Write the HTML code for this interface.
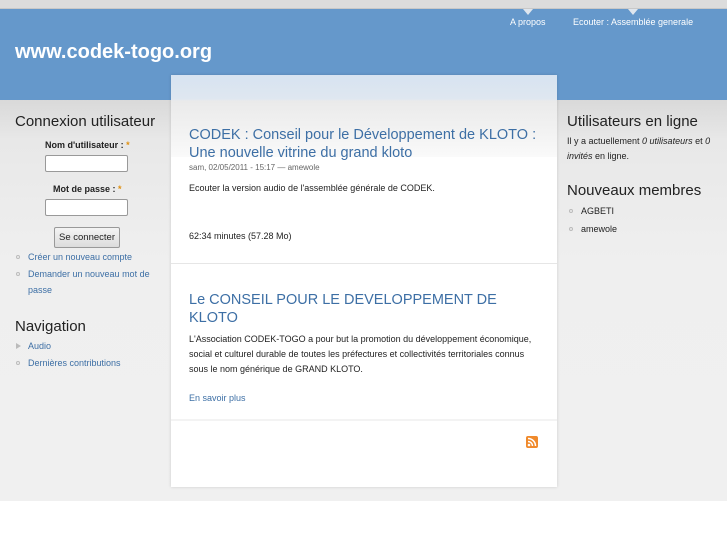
<!DOCTYPE html>
<html><head><meta charset="utf-8"><style>
*{margin:0;padding:0;box-sizing:border-box}
body{width:727px;height:545px;overflow:hidden;background:#fff;font-family:"Liberation Sans","DejaVu Sans",sans-serif;position:relative;color:#222}
.a{position:absolute}
#top{left:0;top:0;width:727px;height:9px;background:#dcdcdc;border-bottom:1px solid #c8c8c8}
#hdr{left:0;top:9px;width:727px;height:91px;background:#6598cb}
#body{left:0;top:100px;width:727px;height:401px;background:linear-gradient(#d9d9d9 0,#e8e8e8 40px,#efefef 160px,#f0f0f0)}
#main{left:171px;top:75px;width:386px;height:412px;background:#fff;box-shadow:0 0 3px rgba(0,0,0,.15)}
#mainTop{left:171px;top:75px;width:386px;height:82px;background:linear-gradient(#d7e3f1 0,#dfe7f0 24px,#eaeaea 26px,#f3f3f3 60px,#fafafa 82px)}
.nav{color:#fff;font-size:9px;top:17px}
.tri{width:0;height:0;border-left:5px solid transparent;border-right:5px solid transparent;border-top:6px solid #dfe6ee;top:9px}
h1{font-size:20px;color:#fff;font-weight:bold;left:15px;top:41px}
h2{font-weight:normal;font-size:15px;color:#222}
.lnk{color:#3d6fa5}
.s{font-size:9px}
.b{width:4px;height:4px;border:1px solid #bbb;border-radius:50%}
input{position:absolute;width:83px;height:17px;border:1px solid #999;border-radius:2px;background:#fff}
</style></head><body>
<div class="a" id="top"></div>
<div class="a" id="hdr"></div>
<div class="a tri" style="left:523px"></div>
<div class="a tri" style="left:628px"></div>
<div class="a nav" style="left:510px">A propos</div>
<div class="a nav" style="left:573px">Ecouter : Assemblée generale</div>
<h1 class="a">www.codek-togo.org</h1>
<div class="a" id="body"></div>
<div class="a" id="main"></div>
<div class="a" id="mainTop"></div>

<h2 class="a" style="left:15px;top:113px">Connexion utilisateur</h2>
<div class="a s" style="left:45px;top:140px;font-weight:bold">Nom d'utilisateur : <span style="color:#e09010">*</span></div>
<input style="left:45px;top:155px">
<div class="a s" style="left:53px;top:184px;font-weight:bold">Mot de passe : <span style="color:#e09010">*</span></div>
<input style="left:45px;top:199px">
<div class="a s" style="left:54px;top:227px;width:66px;height:21px;border:1px solid #999;border-radius:2px;background:linear-gradient(#f4f4f4,#dcdcdc);text-align:center;line-height:19px;font-size:9.5px">Se connecter</div>
<div class="a b" style="left:16px;top:255px"></div>
<div class="a s lnk" style="left:28px;top:252px">Créer un nouveau compte</div>
<div class="a b" style="left:16px;top:272px"></div>
<div class="a s lnk" style="left:28px;top:266px;width:135px;line-height:16px">Demander un nouveau mot de passe</div>
<h2 class="a" style="left:15px;top:318px">Navigation</h2>
<div class="a" style="left:16px;top:343px;width:0;height:0;border-top:3px solid transparent;border-bottom:3px solid transparent;border-left:5px solid #bbb"></div>
<div class="a s lnk" style="left:28px;top:341px">Audio</div>
<div class="a b" style="left:16px;top:361px"></div>
<div class="a s lnk" style="left:28px;top:358px">Dernières contributions</div>

<div class="a lnk" style="left:189px;top:126px;font-size:14.5px;line-height:18px;width:360px">CODEK : Conseil pour le Développement de KLOTO : Une nouvelle vitrine du grand kloto</div>
<div class="a" style="left:189px;top:163px;font-size:8px;color:#666">sam, 02/05/2011 - 15:17 — amewole</div>
<div class="a s" style="left:189px;top:183px">Ecouter la version audio de l'assemblée générale de CODEK.</div>
<div class="a s" style="left:189px;top:231px">62:34 minutes (57.28 Mo)</div>
<div class="a" style="left:171px;top:263px;width:386px;height:1px;background:#e6e6e6"></div>
<div class="a lnk" style="left:189px;top:291px;font-size:14.5px;line-height:18px;width:340px">Le CONSEIL POUR LE DEVELOPPEMENT DE KLOTO</div>
<div class="a s" style="left:189px;top:332px;line-height:15px;width:352px">L'Association CODEK-TOGO a pour but la promotion du développement économique, social et culturel durable de toutes les préfectures et collectivités territoriales connus sous le nom générique de GRAND KLOTO.</div>
<div class="a s lnk" style="left:189px;top:393px">En savoir plus</div>
<div class="a" style="left:171px;top:419px;width:386px;height:2px;background:#f3f3f3"></div>
<svg class="a" style="left:526px;top:436px" width="12" height="12" viewBox="0 0 12 12"><rect width="12" height="12" rx="2" fill="#f08a2c"/><circle cx="3" cy="9" r="1.3" fill="#fff"/><path d="M2 5.5a4.5 4.5 0 0 1 4.5 4.5M2 2.5a7.5 7.5 0 0 1 7.5 7.5" stroke="#fff" stroke-width="1.5" fill="none"/></svg>

<h2 class="a" style="left:567px;top:113px">Utilisateurs en ligne</h2>
<div class="a s" style="left:567px;top:134px;line-height:15px;width:150px">Il y a actuellement <i>0 utilisateurs</i> et <i>0 invités</i> en ligne.</div>
<h2 class="a" style="left:567px;top:182px">Nouveaux membres</h2>
<div class="a b" style="left:569px;top:209px"></div>
<div class="a s" style="left:581px;top:206px">AGBETI</div>
<div class="a b" style="left:569px;top:227px"></div>
<div class="a s" style="left:581px;top:224px">amewole</div>
</body></html>
